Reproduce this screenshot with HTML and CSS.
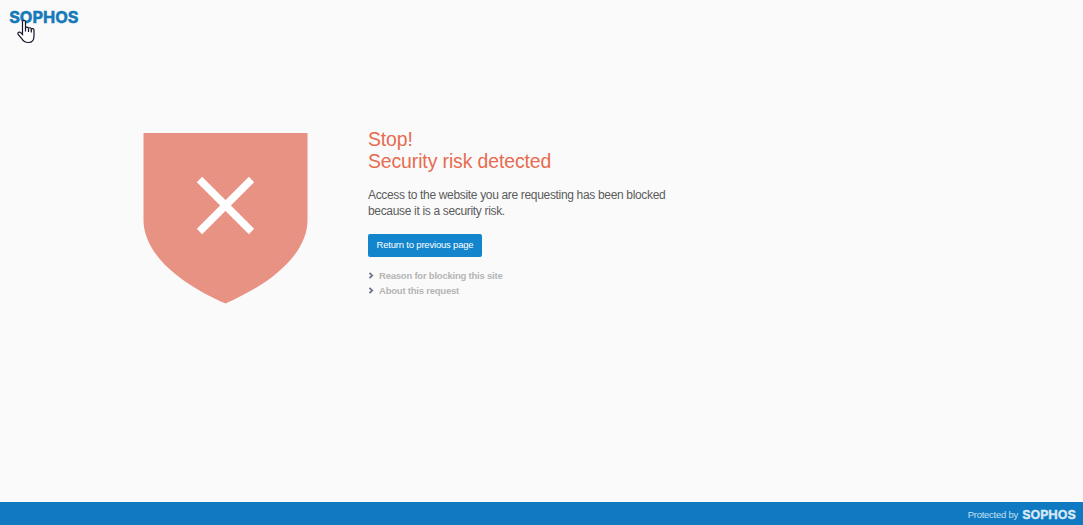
FILE: index.html
```
<!DOCTYPE html>
<html lang="en">
<head>
  <meta charset="UTF-8">
  <title>Security risk detected</title>
  <meta name="viewport" content="width=device-width, initial-scale=1.0">
  <link rel="stylesheet" href="styles.css">
</head>
<body>
  <header class="header">
    <svg class="logo" width="70" height="14" viewBox="0 0 70 14">
      <text x="0.2" y="13" textLength="69.3" lengthAdjust="spacingAndGlyphs">SOPHOS</text>
    </svg>
    <svg class="cursor" width="18" height="25" viewBox="0 0 18 25">
      <path d="M5.500 15.500V3c0-2.200 3-2.200 3 0v6.200c.3-1.500 2.800-1.400 3 .4.500-1.300 2.600-1.100 2.800.6.6-1.100 2.700-.8 2.700 1V17c0 4-2 6.500-5.500 6.500-3.800 0-5.300-1.200-6.800-4L1.200 15.500c-1-2 1.200-3.100 2.500-1.800z"/>
      <path d="M8.500 8.500v4M11.500 9.500v3.500M14.300 10.500V13.500"/>
    </svg>
  </header>

  <main class="main">
    <svg class="shield" width="165" height="171" viewBox="0 0 165 171">
      <path class="shield-body" d="M.5 0H164.500V87C164.500 119 132 149 82.500 170.500C33 149 .5 119 .5 87Z"/>
      <path class="shield-cross" d="M56.500 46.500L108.500 98.500M108.500 46.500L56.500 98.500"/>
    </svg>

    <section class="content">
      <h1>Stop!<br>Security risk detected</h1>
      <p>Access to the website you are requesting has been blocked<br>because it is a security risk.</p>
      <button class="back">Return to previous page</button>
      <ul class="details">
        <li><svg class="chevron" width="6" height="8" viewBox="0 0 6 8"><path d="M1.500 .8l2.700 2.700-2.700 2.700"/></svg><a>Reason for blocking this site</a></li>
        <li><svg class="chevron" width="6" height="8" viewBox="0 0 6 8"><path d="M1.500 .8l2.700 2.700-2.700 2.700"/></svg><a>About this request</a></li>
      </ul>
    </section>
  </main>

  <footer class="footer">
    <span>Protected by</span>
    <svg class="logo" width="54" height="11" viewBox="0 0 54 11">
      <text x="0.2" y="9.800" textLength="53.600" lengthAdjust="spacingAndGlyphs">SOPHOS</text>
    </svg>
  </footer>
</body>
</html>
```
FILE: styles.css
```
* {
  box-sizing: border-box;
}

body {
  margin: 0;
  height: 100vh;
  display: flex;
  flex-direction: column;
  background-color: #fafafa;
  color: #5c5c5c;
  font-family: "Liberation Sans", Arial, sans-serif;
  overflow: hidden;
}

.header {
  position: relative;
  height: 132px;
  padding: 10px 9px;
}

.logo {
  display: block;
  overflow: visible;
  font-family: Inter, sans-serif;
  font-weight: 700;
}

.header .logo {
  fill: #1479b9;
  stroke: #1479b9;
  stroke-width: 0.5;
  font-size: 16px;
}

.cursor {
  position: absolute;
  left: 17px;
  top: 19px;
  fill: #fff;
  stroke: #15152a;
  stroke-width: 1.2;
}

.main {
  flex: 1;
  display: flex;
  align-items: flex-start;
  gap: 60px;
  padding-left: 143px;
}

.shield {
  margin-top: 1px;
}

.shield-body {
  fill: #e89283;
}

.shield-cross {
  fill: none;
  stroke: #fff;
  stroke-width: 7.5;
}

h1 {
  margin: -4px 0 15px;
  font-size: 19.4px;
  font-weight: 400;
  line-height: 22px;
  letter-spacing: -0.1px;
  color: #e76b4f;
}

p {
  margin: 0 0 15px;
  font-size: 12px;
  line-height: 16px;
  letter-spacing: -0.33px;
}

.back {
  display: block;
  width: 114px;
  height: 23px;
  padding: 0 0 2px;
  border: none;
  border-radius: 2px;
  background-color: #1285cd;
  color: #fff;
  font-family: inherit;
  font-size: 9.5px;
  letter-spacing: -0.2px;
  cursor: pointer;
}

.details {
  margin: 11px 0 0;
  padding: 0;
  list-style: none;
  font-size: 9.5px;
  font-weight: 700;
  line-height: 15px;
  letter-spacing: -0.22px;
  color: #b5b5b5;
}

.details li {
  display: flex;
  align-items: center;
  gap: 5px;
}

.chevron {
  fill: none;
  stroke: #70758a;
  stroke-width: 1.8;
}

.footer {
  height: 23px;
  display: flex;
  align-items: center;
  justify-content: flex-end;
  gap: 4px;
  padding: 2px 7px 0 0;
  background-color: #0f79c2;
  color: #c5e0f3;
  font-size: 9.5px;
  letter-spacing: -0.25px;
}

.footer .logo {
  fill: #d8e9f6;
  stroke: #d8e9f6;
  stroke-width: 0.3;
  font-size: 12px;
  letter-spacing: 0;
}
```
